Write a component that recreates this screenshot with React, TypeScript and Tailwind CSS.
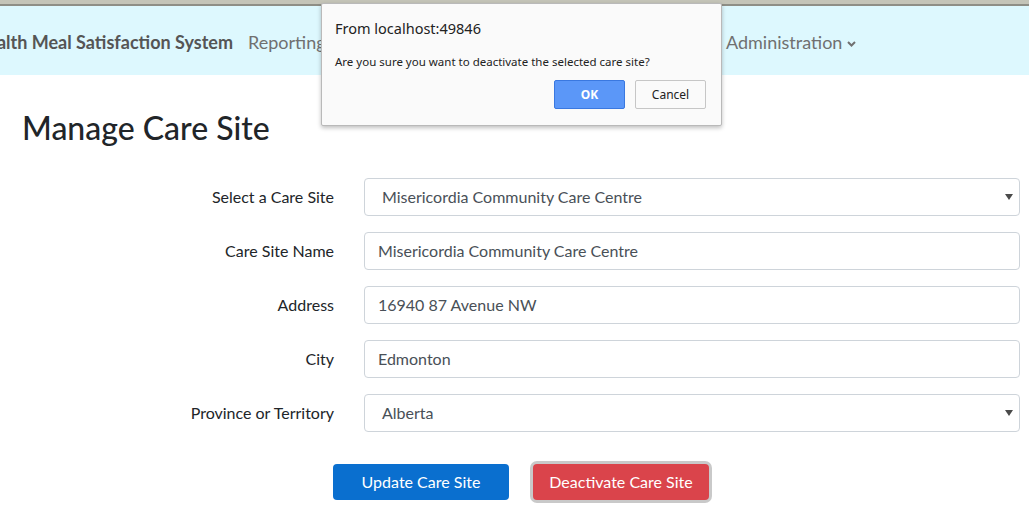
import type { ReactNode } from "react";

const FONT = "font-['Lato','Open_Sans',sans-serif]";

function ChevronDown() {
  return (
    <svg width="9" height="6" viewBox="0 0 9 6" className="ml-[5px] mt-[3px]" aria-hidden>
      <path d="M1 1l3.5 3.5L8 1" fill="none" stroke="currentColor" strokeWidth="2" />
    </svg>
  );
}

function FormRow({ label, children }: { label: string; children: ReactNode }) {
  return (
    <div className="flex h-[38px] items-center">
      <label className="w-[312px] shrink-0 text-right text-[16px] text-[#212529]">{label}</label>
      <div className="ml-[30px] h-full w-[656px] shrink-0">{children}</div>
    </div>
  );
}

function TextInput({ value }: { value: string }) {
  return (
    <div className="flex h-full items-center rounded-[4px] border border-[#ced4da] bg-white px-[13px] text-[16px] text-[#495057]">
      {value}
    </div>
  );
}

function SelectBox({ value }: { value: string }) {
  return (
    <div className="flex h-full items-center justify-between rounded-[4px] border border-[#ced4da] bg-white pl-[17px] pr-[6px] text-[16px] text-[#495057]">
      <span>{value}</span>
      <svg width="8" height="6" viewBox="0 0 8 6" aria-hidden>
        <path d="M0 0h8L4 6z" fill="#4a4a4a" />
      </svg>
    </div>
  );
}

function ConfirmDialog() {
  return (
    <div className="absolute left-[321px] top-[3px] h-[123px] w-[401px] rounded-[2px] border border-[#b9b9b9] bg-[#fafafa] shadow-[0_2px_4px_rgba(0,0,0,0.25)] font-['Noto_Sans','Open_Sans',sans-serif]">
      <p className="absolute left-[13px] top-[14px] text-[14.5px] text-[#222]">From localhost:49846</p>
      <p className="absolute left-[13px] top-[49px] text-[11.5px] text-[#222]">
        Are you sure you want to deactivate the selected care site?
      </p>
      <div className="absolute right-[15px] top-[76px] flex gap-[10px]">
        <button className="h-[29px] w-[71px] rounded-[2px] border border-[#3a78e0] bg-[#5b97f8] text-[12px] font-bold text-white">
          OK
        </button>
        <button className="h-[29px] w-[71px] rounded-[2px] border border-[#c6c6c6] bg-[#fafafa] text-[12px] text-[#222]">
          Cancel
        </button>
      </div>
    </div>
  );
}

export default function App() {
  return (
    <div className={`relative h-[525px] w-[1029px] overflow-hidden bg-white ${FONT}`}>
      {/* browser chrome strip */}
      <div className="h-[4px] bg-[#c4c4b8]" />
      <div className="h-[2px] bg-[#8e8e86]" />

      <nav className="flex h-[69px] items-center bg-[#ddf8fe] pt-[3px] text-[18px]">
        <div className="flex w-[233px] justify-end overflow-hidden whitespace-nowrap font-bold text-[#555]">
          Covenant Health Meal Satisfaction System
        </div>
        <div className="ml-[15px] flex w-[478px] items-center whitespace-nowrap text-[#707070]">
          <span>Reporting</span>
        </div>
        <div className="flex items-center text-[#707070]">
          <span>Administration</span>
          <ChevronDown />
        </div>
      </nav>

      <main className="pl-[22px] pr-[9px]">
        <h1 className="mt-[34px] text-[32px] font-medium leading-[38px] text-[#212529]">Manage Care Site</h1>

        <form className="mt-[31px] flex flex-col gap-[16px]">
          <FormRow label="Select a Care Site">
            <SelectBox value="Misericordia Community Care Centre" />
          </FormRow>
          <FormRow label="Care Site Name">
            <TextInput value="Misericordia Community Care Centre" />
          </FormRow>
          <FormRow label="Address">
            <TextInput value="16940 87 Avenue NW" />
          </FormRow>
          <FormRow label="City">
            <TextInput value="Edmonton" />
          </FormRow>
          <FormRow label="Province or Territory">
            <SelectBox value="Alberta" />
          </FormRow>

          <div className="mt-[16px] flex w-[998px] justify-center gap-[24px]">
            <button
              type="button"
              className="h-[36px] w-[176px] rounded-[4px] bg-[#0a6fcf] text-[16px] text-white"
            >
              Update Care Site
            </button>
            <button
              type="button"
              className="h-[36px] w-[176px] rounded-[4px] bg-[#da444b] text-[16px] text-white ring-[3px] ring-[#c9c9c9]"
            >
              Deactivate Care Site
            </button>
          </div>
        </form>
      </main>

      <ConfirmDialog />
    </div>
  );
}
